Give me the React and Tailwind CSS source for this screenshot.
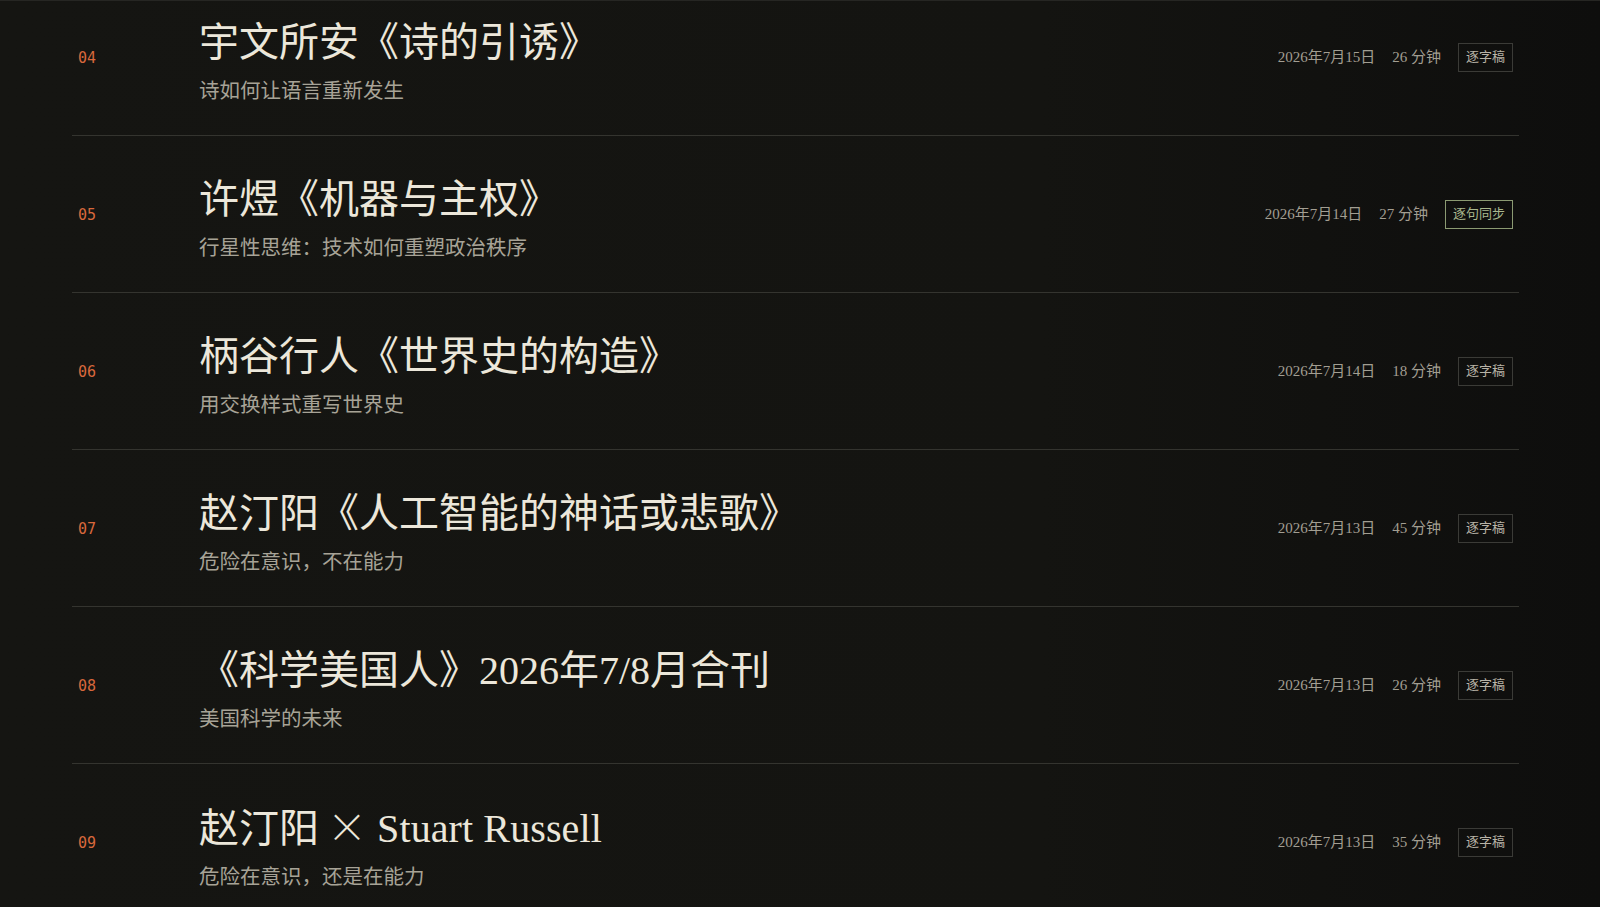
const episodes = [
  { no: '04', title: '宇文所安《诗的引诱》', sub: '诗如何让语言重新发生', date: '2026年7月15日', mins: 26, tag: '逐字稿' },
  { no: '05', title: '许煜《机器与主权》', sub: '行星性思维：技术如何重塑政治秩序', date: '2026年7月14日', mins: 27, tag: '逐句同步', synced: true },
  { no: '06', title: '柄谷行人《世界史的构造》', sub: '用交换样式重写世界史', date: '2026年7月14日', mins: 18, tag: '逐字稿' },
  { no: '07', title: '赵汀阳《人工智能的神话或悲歌》', sub: '危险在意识，不在能力', date: '2026年7月13日', mins: 45, tag: '逐字稿' },
  { no: '08', title: '《科学美国人》2026年7/8月合刊', sub: '美国科学的未来', date: '2026年7月13日', mins: 26, tag: '逐字稿' },
  { no: '09', title: ['赵汀阳 ', '×', ' Stuart Russell'], sub: '危险在意识，还是在能力', date: '2026年7月13日', mins: 35, tag: '逐字稿' },
];

const serif = "font-['Liberation_Serif','Noto_Sans_CJK_SC',serif]";

function Title({ title }) {
  if (!Array.isArray(title)) return title;
  return (
    <>
      {title[0]}
      <span className="font-['Noto_Sans_CJK_SC',sans-serif] font-light text-[40px] -ml-[2px]">{title[1]}</span>
      <span className="tracking-[0.1px]">{title[2]}</span>
    </>
  );
}

function Row({ ep }) {
  return (
    <div className="flex items-center h-[157px] px-1.5 border-b border-[#34342f]">
      <div className="w-[121px] shrink-0 pt-[2px] font-['DejaVu_Sans_Mono',monospace] text-[15px] text-[#d8683c]">
        {ep.no}
      </div>
      <div className="flex-1 min-w-0 pt-[9px]">
        <h3 className={`${serif} text-[40px] leading-[47px] text-[#ece7da]`}>
          <Title title={ep.title} />
        </h3>
        <p className={`${serif} mt-[11px] text-[20.5px] leading-[28px] text-[#a7a397]`}>{ep.sub}</p>
      </div>
      <div className={`${serif} flex items-center gap-[17px] text-[15px] text-[#a29e92]`}>
        <span>{ep.date}</span>
        <span>{ep.mins} 分钟</span>
        <span
          className={
            ep.synced
              ? 'h-[29px] flex items-center px-[7px] border border-[#8b9a72] text-[13px] text-[#a9b88e]'
              : 'h-[29px] flex items-center px-[7px] border border-[#3b3b37] text-[13px] text-[#b8b3a7]'
          }
        >
          {ep.tag}
        </span>
      </div>
    </div>
  );
}

export default function App() {
  return (
    <div className="h-screen overflow-hidden border-t border-[#262623] bg-[linear-gradient(90deg,#151512_0%,#141411_65%,#0e0e0d_100%)]">
      <div className="ml-[72px] w-[1447px] -mt-[22px]">
        {episodes.map((ep) => (
          <Row key={ep.no} ep={ep} />
        ))}
      </div>
    </div>
  );
}
